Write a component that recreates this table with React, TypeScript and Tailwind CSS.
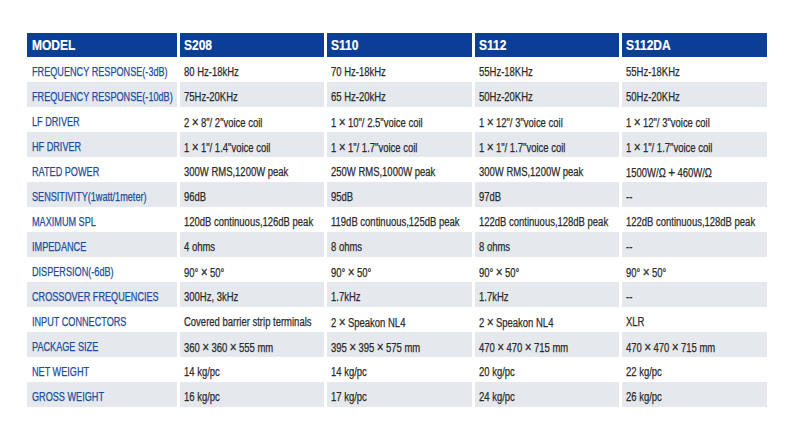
import React from "react";

const headers = ["MODEL", "S208", "S110", "S112", "S112DA"];

const rows: string[][] = [
  ["FREQUENCY RESPONSE(-3dB)", "80 Hz-18kHz", "70 Hz-18kHz", "55Hz-18KHz", "55Hz-18KHz"],
  ["FREQUENCY RESPONSE(-10dB)", "75Hz-20KHz", "65 Hz-20kHz", "50Hz-20KHz", "50Hz-20KHz"],
  ["LF DRIVER", "2×8\"/ 2\"voice coil", "1×10\"/ 2.5\"voice coil", "1×12\"/ 3\"voice coil", "1×12\"/ 3\"voice coil"],
  ["HF DRIVER", "1×1\"/ 1.4\"voice coil", "1×1\"/ 1.7\"voice coil", "1×1\"/ 1.7\"voice coil", "1×1\"/ 1.7\"voice coil"],
  ["RATED POWER", "300W RMS,1200W peak", "250W RMS,1000W peak", "300W RMS,1200W peak", "1500W/Ω+460W/Ω"],
  ["SENSITIVITY(1watt/1meter)", "96dB", "95dB", "97dB", "--"],
  ["MAXIMUM SPL", "120dB continuous,126dB peak", "119dB continuous,125dB peak", "122dB continuous,128dB peak", "122dB continuous,128dB peak"],
  ["IMPEDANCE", "4 ohms", "8 ohms", "8 ohms", "--"],
  ["DISPERSION(-6dB)", "90°×50°", "90°×50°", "90°×50°", "90°×50°"],
  ["CROSSOVER FREQUENCIES", "300Hz, 3kHz", "1.7kHz", "1.7kHz", "--"],
  ["INPUT CONNECTORS", "Covered barrier strip terminals", "2×Speakon NL4", "2×Speakon NL4", "XLR"],
  ["PACKAGE SIZE", "360×360×555 mm", "395×395×575 mm", "470×470×715 mm", "470×470×715 mm"],
  ["NET WEIGHT", "14 kg/pc", "14 kg/pc", "20 kg/pc", "22 kg/pc"],
  ["GROSS WEIGHT", "16 kg/pc", "17 kg/pc", "24 kg/pc", "26 kg/pc"],
];

function Val({ text }: { text: string }) {
  const parts = text.split(/([×+])/);
  return (
    <>
      {parts.map((p, k) =>
        p === "×" || p === "+" ? (
          <span key={k} className="px-[3px] text-[15px] leading-[14px]">
            {p}
          </span>
        ) : (
          <React.Fragment key={k}>{p}</React.Fragment>
        )
      )}
    </>
  );
}

export default function App() {
  return (
    <div className="w-[791px] h-[435px] bg-white pt-[33px] pl-[27px] font-['Liberation_Sans',Arial,sans-serif]">
      <div className="grid grid-cols-[150px_144px_145px_144px_145px] gap-x-[3px]">
        {headers.map((h, j) => (
          <div
            key={h}
            className={
              "h-[24px] bg-[#0b3f96] text-white font-bold text-[15px] leading-[16px] pt-[4px] whitespace-nowrap " +
              (j === 0 ? "pl-[5px]" : "pl-[4px]")
            }
          >
            <span className="inline-block origin-left scale-x-[0.8] [-webkit-text-stroke:0.2px_white]">{h}</span>
          </div>
        ))}
        {rows.map((r, i) =>
          r.map((c, j) => (
            <div
              key={i + "-" + j}
              className={
                "h-[25px] pt-[8px] text-[12px] leading-[14px] whitespace-nowrap " +
                (i % 2 === 1 ? "bg-[#e5e9ed] " : "bg-white ") +
                (j === 0 ? "pl-[5px] text-[#1c4d9c]" : "pl-[4px] text-[#2b2b2b]")
              }
            >
              <span
                className={
                  "inline-block origin-left [-webkit-text-stroke:0.25px_currentColor] " +
                  (j === 0 ? "scale-x-[0.76]" : "scale-x-[0.79]")
                }
              >
                {j === 0 ? c : <Val text={c} />}
              </span>
            </div>
          ))
        )}
      </div>
    </div>
  );
}
